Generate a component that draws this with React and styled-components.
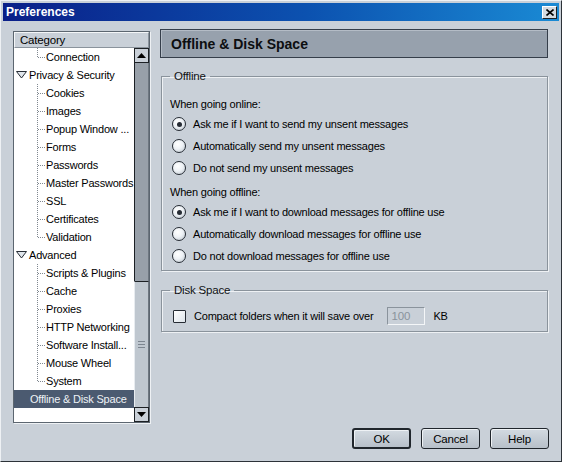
import React from "react";
import styled, { createGlobalStyle } from "styled-components";

const GlobalStyle = createGlobalStyle`
  html, body {
    margin: 0;
    padding: 0;
    background: #c9d0d8;
  }
  body {
    font-family: "Liberation Sans", Arial, sans-serif;
    font-size: 11px;
    letter-spacing: -0.2px;
    color: #000;
  }
  * { box-sizing: border-box; }
`;

// --- window frame ---
const Window = styled.div`
  width: 562px;
  height: 462px;
  background: #c9d0d8;
  border: 1px solid;
  border-color: #eef1f4 #2c3238 #2c3238 #eef1f4;
  padding: 2px;
  display: flex;
  flex-direction: column;
`;

const TitleBar = styled.div`
  height: 18px;
  background: linear-gradient(to right, #0a1f88, #0c52b0 55%, #1a8ad4);
  display: flex;
  align-items: center;
  justify-content: space-between;
  padding: 0 2px 0 3px;
  color: #fff;
  font-weight: bold;
  font-size: 12px;
  letter-spacing: 0;
`;

const CloseButton = styled.div`
  width: 15px;
  height: 13px;
  background: #d4dae0;
  border: 1px solid;
  border-color: #fff #1c2024 #1c2024 #fff;
  display: flex;
  align-items: center;
  justify-content: center;
`;

const Content = styled.div`
  flex: 1;
  display: flex;
  padding: 8px 11px 10px 10px;
`;

// --- category tree ---
const Sidebar = styled.div`
  width: 137px;
  height: 392px;
  margin-top: 2px;
  border: 1px solid #5c6670;
  box-shadow: 1px 1px 0 #eef1f4;
  display: flex;
  flex-direction: column;
`;

const TreeHeader = styled.div`
  height: 16px;
  line-height: 14px;
  padding-left: 5px;
  font-size: 11.5px;
  background: #c9d0d8;
  border: 1px solid;
  border-color: #f4f6f8 #8a939c #8a939c #f4f6f8;
`;

const TreeBody = styled.div`
  flex: 1;
  display: flex;
  background: #fff;
  overflow: hidden;
`;

const TreeRows = styled.div`
  flex: 1;
  display: flex;
  flex-direction: column;
`;

const TreeRow = styled.div`
  height: 18px;
  display: flex;
  align-items: center;
  white-space: nowrap;
  padding-left: ${({ $child, $twisty }) => ($child ? "23px" : $twisty ? "2px" : "16px")};
  background: ${({ $selected }) => ($selected ? "#4b5a70" : "transparent")};
  color: ${({ $selected }) => ($selected ? "#eef2f6" : "#000")};
`;

const TreeLabel = styled.span`
  margin-left: ${({ $gap }) => $gap}px;
`;

const Scrollbar = styled.div`
  width: 15px;
  display: flex;
  flex-direction: column;
`;

const ScrollButton = styled.div`
  height: 15px;
  background: #c9d0d8;
  border: 1px solid #1c2024;
  display: flex;
  align-items: center;
  justify-content: center;
`;

const ScrollTrack = styled.div`
  height: ${({ $h }) => $h}px;
  background: #98a0a9;
  border-left: 1px solid #1c2024;
  border-right: 1px solid #6e7780;
`;

const ScrollThumb = styled.div`
  height: ${({ $h }) => $h}px;
  background: #bfc7cf;
  border-top: 1px solid #1c2024;
  border-left: 1px solid #e8ecf0;
  border-right: 1px solid #6e7780;
  display: flex;
  align-items: center;
  justify-content: center;
`;

// --- right side ---
const Main = styled.div`
  flex: 1;
  margin-left: 10px;
  display: flex;
  flex-direction: column;
`;

const PanelHeader = styled.div`
  height: 29px;
  background: #97a1ad;
  border: 1px solid #353e4a;
  box-shadow: inset 1px 1px 0 #b4bcc6;
  display: flex;
  align-items: center;
  padding-left: 10px;
  font-weight: bold;
  font-size: 14px;
  letter-spacing: 0;
  color: #0c0e10;
`;

const Group = styled.fieldset`
  margin: ${({ $top }) => $top}px 0 0 1px;
  padding: 0 8px ${({ $bottom }) => $bottom}px 8px;
  min-width: 0;
  border: 1px solid #8a939c;
  box-shadow: inset 1px 1px 0 #eef1f4, 1px 1px 0 #eef1f4;
`;

const Legend = styled.legend`
  padding: 0 4px;
  line-height: 14px;
  font-size: 11.5px;
  color: #101214;
`;

const Caption = styled.div`
  height: 18px;
  line-height: 18px;
  margin-top: ${({ $top }) => $top}px;
`;

const OptionRow = styled.div`
  height: ${({ $h }) => $h || 22}px;
  margin-top: ${({ $top }) => $top || 0}px;
  display: flex;
  align-items: center;
  white-space: nowrap;
`;

const Radio = styled.span`
  width: 14px;
  height: 14px;
  margin-left: 2px;
  margin-right: 7px;
  border-radius: 50%;
  border: 1px solid #262c34;
  background: radial-gradient(circle at 40% 35%, #ffffff 0%, #eef2f6 45%, #b9c2cb 100%);
  display: flex;
  align-items: center;
  justify-content: center;
  &::after {
    content: "";
    width: 5px;
    height: 5px;
    border-radius: 50%;
    background: #262c34;
    display: ${({ $checked }) => ($checked ? "block" : "none")};
  }
`;

const Checkbox = styled.span`
  width: 13px;
  height: 13px;
  margin-left: 3px;
  margin-right: 8px;
  border: 1px solid #262c34;
  border-radius: 1px;
  background: linear-gradient(135deg, #ffffff, #dde4ea);
`;

const NumberBox = styled.div`
  width: 38px;
  height: 18px;
  margin-left: 14px;
  border: 1px solid;
  border-color: #8a939c #f4f6f8 #f4f6f8 #8a939c;
  color: #8a939c;
  line-height: 16px;
  padding-left: 3px;
  font-size: 11.5px;
`;

const Unit = styled.span`
  margin-left: 8px;
`;

const ButtonRow = styled.div`
  margin-top: auto;
  margin-right: -1px;
  display: flex;
  justify-content: flex-end;
  gap: 10px;
`;

const Button = styled.div`
  width: 59px;
  height: 21px;
  border: ${({ $default }) => ($default ? "2px" : "1px")} solid #20262c;
  border-radius: 3px;
  background: linear-gradient(#d3dae1, #b7c0c9);
  box-shadow: inset 1px 1px 0 #eef2f5;
  display: flex;
  align-items: center;
  justify-content: center;
  font-size: 11.5px;
`;

const Connector = ({ last }) => (
  <svg width="8" height="18" viewBox="0 0 8 18">
    <line x1="0.5" y1="0" x2="0.5" y2={last ? 9 : 18} stroke="#808890" strokeDasharray="1 1" />
    <line x1="1" y1="9.5" x2="8" y2="9.5" stroke="#808890" strokeDasharray="1 1" />
  </svg>
);

const Twisty = () => (
  <svg width="11" height="8" viewBox="0 0 11 8">
    <polygon points="0.5,0.5 10.5,0.5 5.5,7" fill="#dfe5eb" stroke="#262c34" strokeLinejoin="round" />
  </svg>
);

const Arrow = ({ down }) => (
  <svg width="9" height="5" viewBox="0 0 9 5">
    <polygon points={down ? "0,0 9,0 4.5,5" : "0,5 9,5 4.5,0"} fill="#000" />
  </svg>
);

const tree = [
  { label: "Connection", child: true, last: true },
  { label: "Privacy & Security", twisty: true },
  { label: "Cookies", child: true },
  { label: "Images", child: true },
  { label: "Popup Window ...", child: true },
  { label: "Forms", child: true },
  { label: "Passwords", child: true },
  { label: "Master Passwords", child: true },
  { label: "SSL", child: true },
  { label: "Certificates", child: true },
  { label: "Validation", child: true, last: true },
  { label: "Advanced", twisty: true },
  { label: "Scripts & Plugins", child: true },
  { label: "Cache", child: true },
  { label: "Proxies", child: true },
  { label: "HTTP Networking", child: true },
  { label: "Software Install...", child: true },
  { label: "Mouse Wheel", child: true },
  { label: "System", child: true, last: true },
  { label: "Offline & Disk Space", selected: true },
];

const onlineOptions = [
  "Ask me if I want to send my unsent messages",
  "Automatically send my unsent messages",
  "Do not send my unsent messages",
];

const offlineOptions = [
  "Ask me if I want to download messages for offline use",
  "Automatically download messages for offline use",
  "Do not download messages for offline use",
];

export default function App() {
  return (
    <>
      <GlobalStyle />
      <Window>
        <TitleBar>
          <span>Preferences</span>
          <CloseButton>
            <svg width="8" height="7" viewBox="0 0 8 7">
              <path d="M0.5 0.5 L7.5 6.5 M7.5 0.5 L0.5 6.5" stroke="#000" strokeWidth="1.6" />
            </svg>
          </CloseButton>
        </TitleBar>

        <Content>
          <Sidebar>
            <TreeHeader>Category</TreeHeader>
            <TreeBody>
              <TreeRows>
                {tree.map((item) => (
                  <TreeRow
                    key={item.label}
                    $child={item.child}
                    $twisty={item.twisty}
                    $selected={item.selected}
                  >
                    {item.child && <Connector last={item.last} />}
                    {item.twisty && <Twisty />}
                    <TreeLabel $gap={item.child ? 1 : item.twisty ? 2 : 0}>{item.label}</TreeLabel>
                  </TreeRow>
                ))}
              </TreeRows>
              <Scrollbar>
                <ScrollButton>
                  <Arrow />
                </ScrollButton>
                <ScrollTrack $h={219} />
                <ScrollThumb $h={126}>
                  <svg width="7" height="7" viewBox="0 0 7 7">
                    <path d="M0 0.5 H7 M0 3.5 H7 M0 6.5 H7" stroke="#7d8690" />
                  </svg>
                </ScrollThumb>
                <ScrollButton>
                  <Arrow down />
                </ScrollButton>
              </Scrollbar>
            </TreeBody>
          </Sidebar>

          <Main>
            <PanelHeader>Offline &amp; Disk Space</PanelHeader>

            <Group $top={11} $bottom={3}>
              <Legend>Offline</Legend>
              <Caption $top={12}>When going online:</Caption>
              {onlineOptions.map((text, i) => (
                <OptionRow key={text}>
                  <Radio $checked={i === 0} />
                  {text}
                </OptionRow>
              ))}
              <Caption $top={4}>When going offline:</Caption>
              {offlineOptions.map((text, i) => (
                <OptionRow key={text}>
                  <Radio $checked={i === 0} />
                  {text}
                </OptionRow>
              ))}
            </Group>

            <Group $top={12} $bottom={6}>
              <Legend>Disk Space</Legend>
              <OptionRow $h={18} $top={10}>
                <Checkbox />
                Compact folders when it will save over
                <NumberBox>100</NumberBox>
                <Unit>KB</Unit>
              </OptionRow>
            </Group>

            <ButtonRow>
              <Button $default>OK</Button>
              <Button>Cancel</Button>
              <Button>Help</Button>
            </ButtonRow>
          </Main>
        </Content>
      </Window>
    </>
  );
}
